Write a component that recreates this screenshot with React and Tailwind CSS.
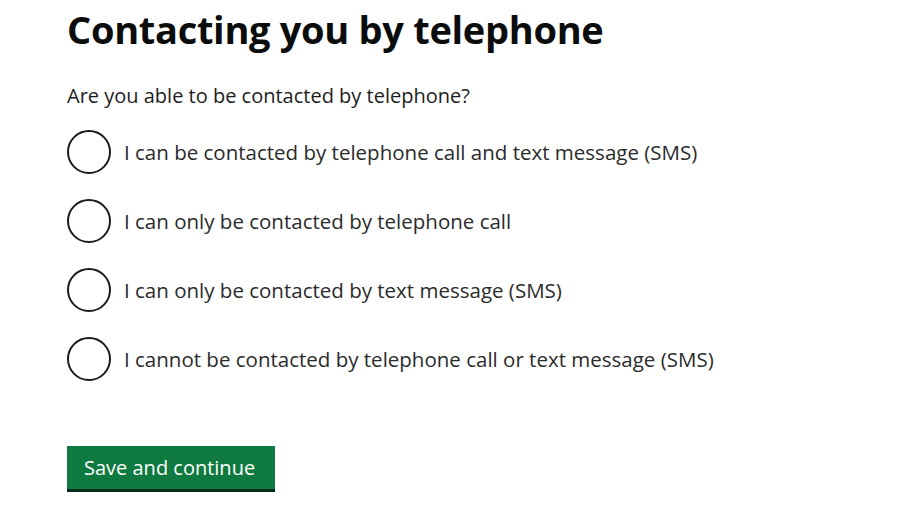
export default function App() {
  const options = [
    "I can be contacted by telephone call and text message (SMS)",
    "I can only be contacted by telephone call",
    "I can only be contacted by text message (SMS)",
    "I cannot be contacted by telephone call or text message (SMS)",
  ];

  return (
    <div
      className="h-[514px] w-[900px] overflow-hidden bg-white pl-[67px] text-[#0b0c0c]"
      style={{ fontFamily: '"Open Sans", "Noto Sans", Arial, sans-serif' }}
    >
      <h1 className="pt-[4px] text-[38px] font-bold leading-[50px] tracking-[-0.3px]">
        Contacting you by telephone
      </h1>
      <p className="mt-[28px] text-[20px] leading-[28px] text-[#1d1d1d]">
        Are you able to be contacted by telephone?
      </p>
      <div className="mt-[20px] flex flex-col gap-[25px]">
        {options.map((label) => (
          <label key={label} className="flex items-center gap-[13px]">
            <span className="h-[44px] w-[44px] shrink-0 rounded-full border-[2.5px] border-[#1b1b1b]" />
            <span className="text-[20.5px] leading-[28px] text-[#2b2b2b]">{label}</span>
          </label>
        ))}
      </div>
      <button className="mt-[65px] h-[46px] w-[208px] border-b-[3px] border-[#002d18] bg-[#0f7a3f] pl-[17px] text-left text-[20px] text-white">
        Save and continue
      </button>
    </div>
  );
}
